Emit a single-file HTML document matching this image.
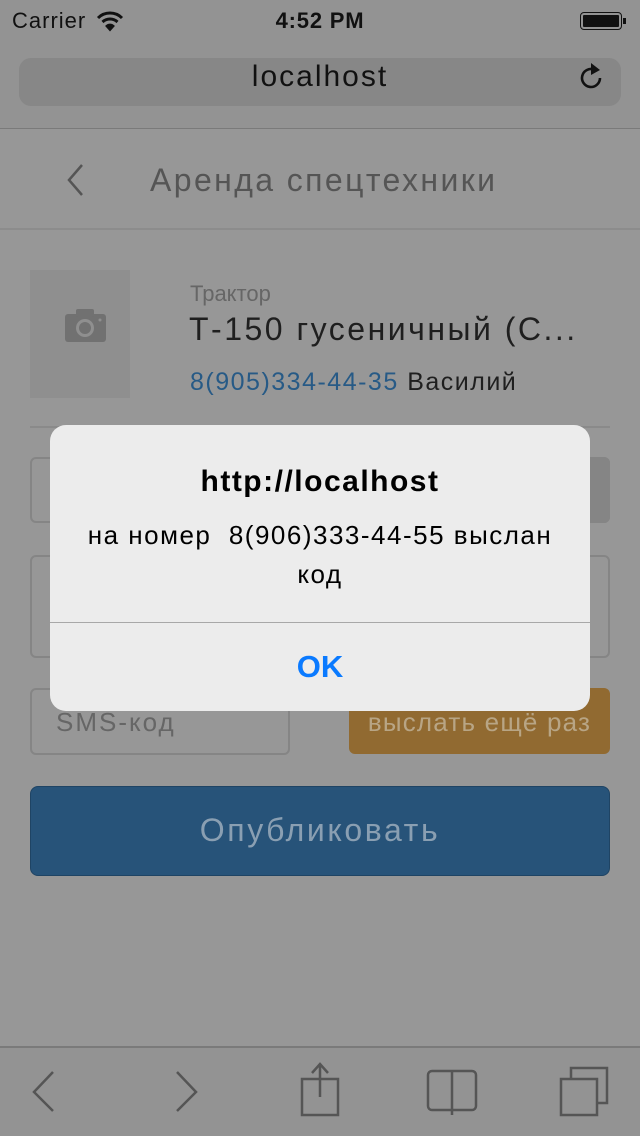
<!DOCTYPE html>
<html><head><meta charset="utf-8"><style>
*{margin:0;padding:0;box-sizing:border-box}
body{width:640px;height:1136px;background:#979797;font-family:"Liberation Sans",sans-serif;position:relative;overflow:hidden}
.a{position:absolute;white-space:nowrap}
</style></head><body>
<div class="a" style="left:0;top:0;width:640px;height:128px;background:#939393"></div>
<div class="a" style="left:12px;top:8px;font-size:22px;color:#111;letter-spacing:1px">Carrier</div>
<svg class="a" style="left:96px;top:10px" width="28" height="22" viewBox="0 0 28 22"><path d="M2 8 A17 17 0 0 1 26 8" stroke="#111" stroke-width="3" fill="none"/><path d="M6.5 12 A11 11 0 0 1 21.5 12" stroke="#111" stroke-width="3" fill="none"/><path d="M10.5 16 A5 5 0 0 1 17.5 16 L14 20Z" fill="#111" stroke="#111" stroke-width="2"/></svg>
<div class="a" style="left:0;width:640px;top:8px;text-align:center;font-size:22px;font-weight:bold;color:#111;letter-spacing:0.8px">4:52 PM</div>
<div class="a" style="left:580px;top:12px;width:42px;height:18px;border:1.5px solid #111;border-radius:4px;padding:2px"><div style="background:#111;width:100%;height:100%;border-radius:1px"></div></div>
<div class="a" style="left:623px;top:18px;width:3px;height:6px;background:#111"></div>
<div class="a" style="left:19px;top:58px;width:602px;height:48px;background:#878787;border-radius:12px"></div>
<div class="a" style="left:0;width:640px;top:60px;text-align:center;font-size:30px;color:#111;letter-spacing:2px">localhost</div>
<svg class="a" style="left:574px;top:60px" width="34" height="34" viewBox="0 0 34 34"><path d="M26 18 A9 9 0 1 1 20 9.5" stroke="#111" stroke-width="2.6" fill="none"/><path d="M17 3 L26 10 L17 15Z" fill="#111"/></svg>
<div class="a" style="left:0;top:128px;width:640px;height:1px;background:#7a7a7a"></div>
<svg class="a" style="left:62px;top:162px" width="26" height="36"><path d="M20 3 L7 18 L20 33" stroke="#555" stroke-width="2.5" fill="none"/></svg>
<div class="a" style="left:150px;top:162px;font-size:32px;color:#555;letter-spacing:2.4px">Аренда спецтехники</div>
<div class="a" style="left:0;top:228px;width:640px;height:2px;background:#8c8c8c"></div>
<div class="a" style="left:30px;top:270px;width:100px;height:128px;background:#8f8f8f"></div>
<svg class="a" style="left:64px;top:308px" width="44" height="36" viewBox="0 0 44 36"><rect x="1" y="6" width="41" height="28" rx="3" fill="#717171"/><rect x="12" y="1" width="18" height="8" rx="2" fill="#717171"/><circle cx="21" cy="20" r="9" fill="#8f8f8f"/><circle cx="21" cy="20" r="6" fill="#717171"/><circle cx="36" cy="12" r="1.5" fill="#8f8f8f"/></svg>
<div class="a" style="left:190px;top:281px;font-size:22px;color:#666">Трактор</div>
<div class="a" style="left:189px;top:311px;font-size:32px;color:#1f1f1f;letter-spacing:2.5px">Т-150 гусеничный (С...</div>
<div class="a" style="left:190px;top:368px;font-size:25px;color:#275a86;letter-spacing:1.5px">8(905)334-44-35 <span style="color:#1f1f1f">Василий</span></div>
<div class="a" style="left:30px;top:426px;width:580px;height:2px;background:#8a8a8a"></div>
<div class="a" style="left:30px;top:457px;width:580px;height:66px;border:2px solid #858585;border-radius:6px"></div>
<div class="a" style="left:560px;top:457px;width:50px;height:66px;background:#858585;border-radius:0 6px 6px 0"></div>
<div class="a" style="left:30px;top:555px;width:580px;height:103px;border:2px solid #858585;border-radius:6px"></div>
<div class="a" style="left:30px;top:688px;width:260px;height:67px;border:2px solid #858585;border-radius:6px"></div>
<div class="a" style="left:56px;top:707px;font-size:26px;color:#666;letter-spacing:2px">SMS-код</div>
<div class="a" style="left:349px;top:688px;width:261px;height:66px;background:#916a31;border-radius:6px"></div>
<div class="a" style="left:349px;top:707px;width:261px;text-align:center;font-size:26px;color:#b8a585;letter-spacing:1.2px">выслать ещё раз</div>
<div class="a" style="left:30px;top:786px;width:580px;height:90px;background:#275379;border:1px solid #1f4464;border-radius:8px"></div>
<div class="a" style="left:30px;top:812px;width:580px;text-align:center;font-size:32px;color:#8a9fb2;letter-spacing:2.6px">Опубликовать</div>
<div class="a" style="left:0;top:1046px;width:640px;height:90px;background:#939393;border-top:2px solid #7a7a7a"></div>
<svg class="a" style="left:0;top:1040px" width="640" height="96" viewBox="0 0 640 96"><g stroke="#555" stroke-width="2.5" fill="none"><path d="M53 32 L34 52 L53 71"/><path d="M177 32 L196 52 L177 71"/><rect x="302" y="39" width="36" height="36"/><path d="M320 57 V25 M312 33 L320 24 L328 33"/><path d="M452 31 H432 a4 4 0 0 0 -4 4 V66 a4 4 0 0 0 4 4 H452 V31Z M452 31 H472 a4 4 0 0 1 4 4 V66 a4 4 0 0 1 -4 4 H452 M452 70 V75"/><rect x="561" y="39" width="36" height="36"/><path d="M571 39 V28 H607 V63 H597"/></g></svg>
<div class="a" style="left:50px;top:425px;width:540px;height:286px;background:#ececec;border-radius:16px;overflow:hidden">
<div style="position:absolute;top:40px;width:100%;text-align:center;font-size:30px;font-weight:bold;color:#000;letter-spacing:1.5px">http://localhost</div>
<div style="position:absolute;top:91px;left:0;right:0;text-align:center;font-size:26px;line-height:39px;color:#000;letter-spacing:1.5px">на номер&nbsp; 8(906)333-44-55 выслан<br>код</div>
<div style="position:absolute;top:197px;width:100%;height:1px;background:#a8a8a8"></div>
<div style="position:absolute;top:224px;width:100%;text-align:center;font-size:31px;font-weight:bold;color:#0a7aff">OK</div>
</div>
</body></html>
